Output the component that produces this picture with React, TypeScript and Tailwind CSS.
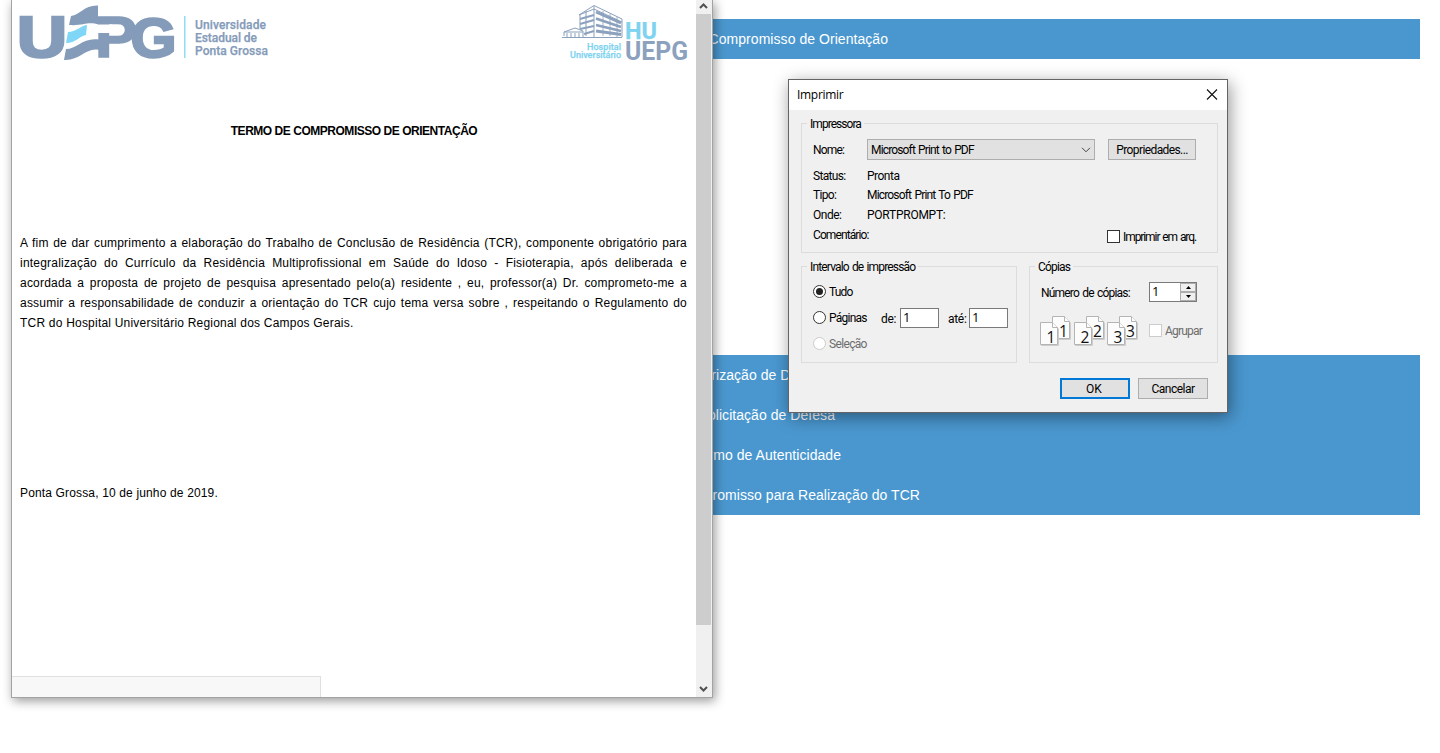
import type { ReactNode } from "react";

function Bar({ children, end }: { children: ReactNode; end: string }) {
  return (
    <div className="h-10 bg-[#4a97cf] text-white text-[14px] leading-[40px] tracking-[0.05px]">
      <div className={`${end} text-right whitespace-nowrap`}>{children}</div>
    </div>
  );
}

function UepgLogo() {
  return (
    <svg width="252" height="64" viewBox="18 0 252 64" fill="#849bb9">
      <g fontFamily="Liberation Sans, sans-serif" fontWeight="700" stroke="#849bb9">
        <text x="17" y="57" fontSize="57" textLength="50" lengthAdjust="spacingAndGlyphs" strokeWidth="2.6">U</text>
        <text x="95" y="56.8" fontSize="57" textLength="42" lengthAdjust="spacingAndGlyphs" strokeWidth="1.6">P</text>
        <text x="130.5" y="56.5" fontSize="56" textLength="46" lengthAdjust="spacingAndGlyphs" strokeWidth="2.4">G</text>
      </g>
      <path d="M96 24.500H112V33H96Z" fill="#fff" />
      <path d="M71 16C80 15 84 5 98 5.500V16.500H99V24.500C87 21 84 26 69 25Z" />
      <path d="M68 32C76 32 80 26 87 25L86 35C79 36 76 43 66 43Z" fill="#7fd6f7" />
      <path d="M66 49C77 49 83 37 99 39.500V50C86 47 80 61 64 60Z" />
      <path d="M184 16h1.500v42h-1.500z" fill="#8fdcf7" />
      <g fontFamily="Roboto, sans-serif" fontWeight="500" fontSize="12" stroke="#849bb9" strokeWidth=".25">
        <text x="195" y="28.500" textLength="71">Universidade</text>
        <text x="195" y="41.800" textLength="62">Estadual de</text>
        <text x="195" y="54.500" textLength="73">Ponta Grossa</text>
      </g>
    </svg>
  );
}

function HospitalLogo() {
  return (
    <svg width="127" height="64" viewBox="561 0 127 64">
      <g fill="none" stroke="#8ba1bd" strokeWidth="1">
        <path d="M562 37.500h60M564 36v-4l11-4 8 3v6M564 32h19M567 33v4M571 33v4M575 33v4M579 33v4" />
        <path d="M579 15 594 5.500 622 19M580 14V29M594 6V37M622 19V37M579 15l15-6 28 13M586 11v25" />
        <path d="M580 19l14-4M580 24l14-4M580 29l14-3M584 34l10-3" strokeWidth="2" />
        <path d="M596 12 621 23M596 18.500 621 27M596 25 621 31M596 31 621 34.500" strokeWidth="2.800" />
        <path d="M603 11v25M610 14v22M617 17v20" strokeWidth=".8" />
      </g>
      <g fontFamily="Roboto, sans-serif" fontWeight="500">
        <g fill="#7dd3f0" stroke="#7dd3f0" strokeWidth=".25">
          <text x="587" y="49.500" fontSize="9" textLength="34">Hospital</text>
          <text x="570" y="58" fontSize="9" textLength="51">Universitário</text>
          <text x="625" y="38.500" fontSize="24" fontWeight="700" textLength="32" lengthAdjust="spacingAndGlyphs">HU</text>
        </g>
        <text x="625" y="59.500" fontSize="25" fontWeight="700" textLength="63" lengthAdjust="spacingAndGlyphs" fill="#8ba1bd">UEPG</text>
      </g>
    </svg>
  );
}

const lines = [
  "A fim de dar cumprimento a elaboração do Trabalho de Conclusão de Residência (TCR), componente obrigatório para",
  "integralização do Currículo da Residência Multiprofissional em Saúde do Idoso - Fisioterapia, após deliberada e",
  "acordada a proposta de projeto de pesquisa apresentado pelo(a) residente , eu, professor(a) Dr. comprometo-me a",
  "assumir a responsabilidade de conduzir a orientação do TCR cujo tema versa sobre , respeitando o Regulamento do",
];

function DocumentWindow() {
  return (
    <div className="absolute left-[11px] top-0 flex h-[698px] w-[702px] border border-t-0 border-[#a3a3a3] bg-white shadow-[2px_3px_10px_rgba(0,0,0,0.4)]">
      <div className="flex w-[684px] flex-col text-black">
        <div className="flex justify-between pl-1.5 pr-2">
          <UepgLogo />
          <HospitalLogo />
        </div>
        <h1 className="mt-[57px] h-5 text-center text-[12px] font-bold leading-5 tracking-[-0.47px]">TERMO DE COMPROMISSO DE ORIENTAÇÃO</h1>
        <div className="ml-2 mt-[92px] w-[667px] text-[12px] leading-5 tracking-[0.21px]">
          {lines.map((l) => (
            <div key={l} className="whitespace-nowrap [text-align-last:justify]">{l}</div>
          ))}
          <div>TCR do Hospital Universitário Regional dos Campos Gerais.</div>
          <div className="mt-[150px] tracking-[0.15px]">Ponta Grossa, 10 de junho de 2019.</div>
        </div>
        <div className="mt-auto h-[21px] w-[309px] border-r border-t border-[#e0e0e0] bg-[#f8f8f8]" />
      </div>
      <div className="flex w-4 flex-col bg-[#f0f0f0]">
        <div className="flex h-3.5 w-[15px] items-start justify-center">
          <svg width="9" height="10" viewBox="0 0 9 10" fill="none" stroke="#505050" strokeWidth="2"><path d="M1 8 4.500 4.500 8 8" /></svg>
        </div>
        <div className="h-[611px] w-[15px] bg-[#cdcdcd]" />
        <div className="mt-auto flex h-[13px] w-[15px] items-start justify-center">
          <svg width="9" height="10" viewBox="0 0 9 10" fill="none" stroke="#505050" strokeWidth="2"><path d="M1 3 4.500 6.500 8 3" /></svg>
        </div>
      </div>
    </div>
  );
}

function Group({ title, className, children }: { title: string; className: string; children: ReactNode }) {
  return (
    <fieldset className={`min-w-0 shrink-0 border border-[#dcdcdc] ${className}`}>
      <legend className="ml-[5px] h-[15px] px-[3px] leading-[16px]">{title}</legend>
      {children}
    </fieldset>
  );
}

function Radio({ checked, disabled }: { checked?: boolean; disabled?: boolean }) {
  return (
    <span className={`-mt-px flex size-[13px] shrink-0 items-center justify-center rounded-full border bg-white ${disabled ? "border-[#cccccc]" : "border-[#333333]"}`}>
      {checked && <span className="size-[7px] rounded-full bg-[#222222]" />}
    </span>
  );
}

function Pages({ n }: { n: string }) {
  return (
    <svg width="32" height="32" viewBox="0 0 32 32" fill="#fcfcfc" stroke="#b4b4b4" strokeWidth="1">
      <path d="M12.500.500h12l5 5v17h-17z" />
      <path d="M24.500.500v5h5" />
      <path d="M13 23.500h17.500v-17" stroke="#cccccc" fill="none" />
      <text x="19" y="20.500" fontSize="15.500" fill="#111" stroke="none" fontFamily="Open Sans, sans-serif">{n}</text>
      <path d="M.500 6.500h12l5 5v17H.500z" />
      <path d="M12.500 6.500v5h5" />
      <path d="M1 29.500h17.500v-17" stroke="#cccccc" fill="none" />
      <text x="6.500" y="26.500" fontSize="15.500" fill="#111" stroke="none" fontFamily="Open Sans, sans-serif">{n}</text>
    </svg>
  );
}

const box = "h-5 border border-[#7a7a7a] bg-white pl-[2px] leading-[17px] text-[13px] font-['Open_Sans',sans-serif]";

function PrintDialog() {
  return (
    <div className="absolute left-[788px] top-[79px] flex h-[334px] w-[440px] flex-col border border-[#646464] bg-[#f0f0f0] font-['Roboto',sans-serif] text-[12px] text-black shadow-[2px_4px_16px_rgba(0,0,0,0.42)]">
      <div className="flex h-[30px] shrink-0 items-center justify-between bg-white pl-2 pr-[9px] font-['Open_Sans',sans-serif] text-[12px] tracking-[-0.3px]">
        <span>Imprimir</span>
        <svg width="12" height="12" viewBox="0 0 12 12" stroke="#111" strokeWidth="1.100"><path d="M1 0.500 11 10.500M11 .500 1 10.500" /></svg>
      </div>
      <div className="pl-3 pr-[9px] pt-1.5 [word-spacing:1px]">
        <Group title="Impressora" className="h-[137px] w-[417px] tracking-[-0.95px]">
          <div className="mt-2 flex h-[21px] items-center pl-[11px]">
            <span className="w-[54px] tracking-[-0.8px]">Nome:</span>
            <div className="flex h-[21px] w-[228px] items-center justify-between border border-[#adadad] bg-[#e1e1e1] pl-[3px] pr-[3px]">
              <span className="tracking-[-0.85px]">Microsoft Print to PDF</span>
              <svg width="10" height="6" viewBox="0 0 10 6" fill="none" stroke="#444"><path d="M1 .800 5 4.800 9 .800" /></svg>
            </div>
            <button className="ml-[13px] h-[21px] w-[88px] border border-[#adadad] bg-[#e1e1e1] leading-[21px] tracking-[-0.6px]">Propriedades...</button>
          </div>
          <div className="mt-1.5 flex pl-[11px]">
            <div className="flex w-[294px] flex-col">
              <div className="flex h-5 items-center"><span className="w-[54px] tracking-[-0.66px]">Status:</span><span className="tracking-[-0.5px]">Pronta</span></div>
              <div className="flex h-[18px] items-center"><span className="w-[54px] tracking-[-0.66px]">Tipo:</span><span className="tracking-[-0.82px]">Microsoft Print To PDF</span></div>
              <div className="flex h-[21px] items-center"><span className="w-[54px] tracking-[-0.5px]">Onde:</span><span className="tracking-[-0.25px]">PORTPROMPT:</span></div>
              <div className="flex h-[19px] items-center tracking-[-0.9px]">Comentário:</div>
            </div>
            <div className="flex h-[15px] items-center self-end whitespace-nowrap">
              <span className="mr-[3px] size-[13px] border border-[#333] bg-white" />
              <span className="tracking-[-1.08px]">Imprimir em arq.</span>
            </div>
          </div>
        </Group>
        <div className="mt-1.5 flex gap-3">
          <Group title="Intervalo de impressão" className="h-[104px] w-[216px] tracking-[-0.84px]">
            <div className="mt-[5px] flex flex-col pl-[11px]">
              <div className="flex h-[26px] items-center gap-[3px]"><Radio checked /><span>Tudo</span></div>
              <div className="flex h-[26px] items-center">
                <Radio />
                <span className="ml-[3px] w-[52px] tracking-[-0.75px]">Páginas</span>
                <span className="mt-0.5 w-[19px] tracking-[-0.3px]">de:</span>
                <div className={`${box} w-[39px]`}>1</div>
                <span className="ml-[9px] mt-0.5 w-[21px] tracking-[-0.3px]">até:</span>
                <div className={`${box} w-[39px]`}>1</div>
              </div>
              <div className="flex h-[26px] items-center gap-[3px] text-[#6d6d6d] tracking-[-0.66px]"><Radio disabled /><span>Seleção</span></div>
            </div>
          </Group>
          <Group title="Cópias" className="h-[104px] w-[189px] tracking-[-0.8px]">
            <div className="mt-2 flex h-5 items-center pl-[11px]">
              <span className="mt-0.5 w-[108px]">Número de cópias:</span>
              <div className={`${box} flex w-[48px] justify-between`}>
                <span>1</span>
                <div className="flex w-4 flex-col bg-[#f0f0f0]">
                  <span className="flex h-[9px] items-center justify-center border border-[#adadad]"><svg width="5" height="3" viewBox="0 0 5 3"><path d="M0 3 2.500 0 5 3z" /></svg></span>
                  <span className="flex h-[9px] items-center justify-center border border-[#adadad]"><svg width="5" height="3" viewBox="0 0 5 3"><path d="M0 0 2.500 3 5 0z" /></svg></span>
                </div>
              </div>
            </div>
            <div className="mt-3.5 flex h-8 pl-2.5">
              <div className="flex w-[109px] gap-[1.500px]"><Pages n="1" /><Pages n="2" /><Pages n="3" /></div>
              <span className="mr-[3px] mt-2 size-[13px] shrink-0 border border-[#cccccc] bg-white" />
              <span className="mt-[7px] leading-4 text-[#6d6d6d]">Agrupar</span>
            </div>
          </Group>
        </div>
        <div className="mt-[15px] flex justify-end gap-2 pr-2.5">
          <button className="h-[21px] w-[70px] border-2 border-[#0078d7] bg-[#e1e1e1] pr-0.5 leading-[19px]">OK</button>
          <button className="h-[21px] w-[70px] border border-[#adadad] bg-[#e1e1e1] leading-[21px] tracking-[-0.5px]">Cancelar</button>
        </div>
      </div>
    </div>
  );
}

export default function App() {
  return (
    <main className="relative h-[753px] w-[1440px] overflow-hidden bg-white font-['Liberation_Sans',Arial,sans-serif]">
      <div className="flex flex-col px-5 pt-[19px]">
        <Bar end="w-[868px]">Compromisso de Orientação</Bar>
        <div className="h-[296px]" />
        <Bar end="w-[805px]">Autorização de Defesa</Bar>
        <Bar end="w-[815px]">Solicitação de Defesa</Bar>
        <Bar end="w-[821px]">Termo de Autenticidade</Bar>
        <Bar end="w-[900px]">Compromisso para Realização do TCR</Bar>
      </div>
      <DocumentWindow />
      <PrintDialog />
    </main>
  );
}
